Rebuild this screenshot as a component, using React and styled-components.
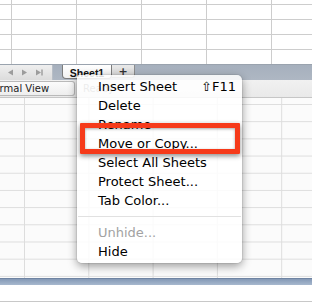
import React from "react";
import styled, { createGlobalStyle } from "styled-components";

const Global = createGlobalStyle`
  html, body { margin: 0; padding: 0; }
  body { width: 312px; height: 305px; overflow: hidden; background: #fff; font-family: "DejaVu Sans", sans-serif; }
`;

const Page = styled.div`
  position: relative;
  width: 312px;
  height: 305px;
  display: flex;
  flex-direction: column;
  overflow: hidden;
`;

const SheetGrid = styled.div`
  height: ${(p) => p.$h}px;
  flex: ${(p) => (p.$grow ? 1 : "none")};
  background-color: ${(p) => p.$bg};
  background-image:
    linear-gradient(to right, ${(p) => p.$line} 1px, transparent 1px),
    linear-gradient(to bottom, ${(p) => p.$line} 1px, transparent 1px);
  background-size: ${(p) => p.$cw}px 100%, 100% ${(p) => p.$rh}px;
  background-position: ${(p) => p.$ox}px 0, 0 ${(p) => p.$oy}px;
`;

const TabBar = styled.div`
  height: 16px;
  display: flex;
  align-items: flex-start;
  background: linear-gradient(#a6b0bd, #aeb7c3);
  border-top: 1px solid #9aa3ae;
  box-sizing: border-box;
`;

const ScrollArea = styled.div`
  width: 53px;
  height: 15px;
  background: linear-gradient(#efefef, #dcdcdc);
  border-right: 1px solid #b8bec6;
  box-sizing: border-box;
  display: flex;
  align-items: center;
  gap: 6px;
  padding-left: 7px;
`;

const Gap = styled.div`
  width: ${(p) => p.$w}px;
`;

const SheetTab = styled.div`
  width: 50px;
  height: 14px;
  box-sizing: border-box;
  background: linear-gradient(#ffffff, #f1f1f1);
  border: 1px solid #7d7d7d;
  border-top: none;
  border-radius: 0 0 4px 4px;
  font-family: "Liberation Sans", Arial, sans-serif;
  font-weight: bold;
  font-size: 10.5px;
  color: #111;
  display: flex;
  justify-content: center;
  align-items: center;
  padding-top: 2px;
`;

const PlusTab = styled.div`
  width: 23px;
  height: 13px;
  box-sizing: border-box;
  background: linear-gradient(#e9e9e9, #d4d4d4);
  border: 1px solid #8c8c8c;
  border-top: none;
  border-left: none;
  border-radius: 0 0 3px 0;
  font-family: "DejaVu Sans", sans-serif;
  font-weight: bold;
  font-size: 11px;
  color: #333;
  display: flex;
  justify-content: center;
  align-items: center;
`;

const StatusBar = styled.div`
  height: 18px;
  display: flex;
  align-items: center;
  gap: 8px;
  background: linear-gradient(#f1f1f1, #e9e9e9);
  border-bottom: 1px solid #c6c6c6;
  box-sizing: border-box;
`;

const ViewBox = styled.div`
  width: 75px;
  height: 15px;
  box-sizing: border-box;
  border: 1px solid #b9b9b9;
  border-left: none;
  border-radius: 0 3px 3px 0;
  background: linear-gradient(#fbfbfb, #eeeeee);
  overflow: hidden;
  display: flex;
  align-items: center;
`;

const StatusText = styled.span`
  font-size: 10px;
  color: ${(p) => p.$c};
  white-space: nowrap;
  margin-left: ${(p) => p.$ml || 0}px;
`;

const BlueBar = styled.div`
  height: 7px;
  background: linear-gradient(#8499b6, #a7b8ce);
  border-top: 1px solid #6f84a2;
  box-sizing: border-box;
`;

const Footer = styled.div`
  height: 17px;
  background: #fff;
  border-bottom: 1px solid #c8c8c8;
  box-sizing: border-box;
  margin-bottom: 3px;
  flex: none;
`;

const Menu = styled.div`
  position: absolute;
  left: 77px;
  top: 75px;
  width: 165px;
  box-sizing: border-box;
  padding: 1.5px 0 2.5px;
  background: rgba(255, 255, 255, 0.86);
  border-radius: 2px 5px 5px 5px;
  box-shadow: 0 3px 10px rgba(0, 0, 0, 0.4), 0 0 0 1px rgba(0, 0, 0, 0.06);
`;

const Item = styled.div`
  height: 19px;
  line-height: 19px;
  padding: 0 6px 0 21px;
  display: flex;
  justify-content: space-between;
  font-size: 13px;
  color: ${(p) => (p.$disabled ? "#a2a2a2" : "#000")};
  white-space: nowrap;
`;

const Shortcut = styled.span`
  font-size: 13px;
  color: #000;
`;

const Separator = styled.div`
  height: 1px;
  background: #e1e1e1;
  margin: 6px 1px 6px;
`;

const Highlight = styled.div`
  position: absolute;
  left: 80px;
  top: 123px;
  width: 160px;
  height: 31px;
  box-sizing: border-box;
  border: 5px solid #f63a1a;
  border-radius: 1px;
  box-shadow: 0 2px 5px rgba(0, 0, 0, 0.45), inset 0 1px 3px rgba(0, 0, 0, 0.35);
`;

const Arrow = ({ dir, bar }) => (
  <svg width="8" height="7" viewBox="0 0 8 7">
    {dir === "left" ? (
      <polygon points="6,0.5 6,6.5 1,3.5" fill="#9c9c9c" />
    ) : (
      <polygon points="1,0.5 1,6.5 6,3.5" fill="#9c9c9c" />
    )}
    {bar && <rect x="6.3" y="0.5" width="1.4" height="6" fill="#9c9c9c" />}
  </svg>
);

const items = [
  { label: "Insert Sheet", shortcut: "⇧F11" },
  { label: "Delete" },
  { label: "Rename" },
  { label: "Move or Copy..." },
  { label: "Select All Sheets" },
  { label: "Protect Sheet..." },
  { label: "Tab Color..." },
  { sep: true },
  { label: "Unhide...", disabled: true },
  { label: "Hide" },
];

export default function App() {
  return (
    <>
      <Global />
      <Page>
        <SheetGrid $h={64} $bg="#ffffff" $line="#cdcdcd" $cw={65} $rh={15} $ox={11} $oy={4} />
        <TabBar>
          <ScrollArea>
            <Arrow dir="left" />
            <Arrow dir="right" />
            <Arrow dir="right" bar />
          </ScrollArea>
          <Gap $w={9} />
          <SheetTab>Sheet1</SheetTab>
          <PlusTab>+</PlusTab>
        </TabBar>
        <StatusBar>
          <ViewBox>
            <StatusText $c="#222" $ml={-14}>Normal View</StatusText>
          </ViewBox>
          <StatusText $c="#777">Ready</StatusText>
        </StatusBar>
        <SheetGrid $grow $bg="#fbfbfb" $line="#dddddd" $cw={64.3} $rh={17.2} $ox={24} $oy={6} />
        <BlueBar />
        <Footer />
        <Menu>
          {items.map((it, i) =>
            it.sep ? (
              <Separator key={i} />
            ) : (
              <Item key={i} $disabled={it.disabled}>
                <span>{it.label}</span>
                {it.shortcut && <Shortcut>{it.shortcut}</Shortcut>}
              </Item>
            )
          )}
        </Menu>
        <Highlight />
      </Page>
    </>
  );
}
